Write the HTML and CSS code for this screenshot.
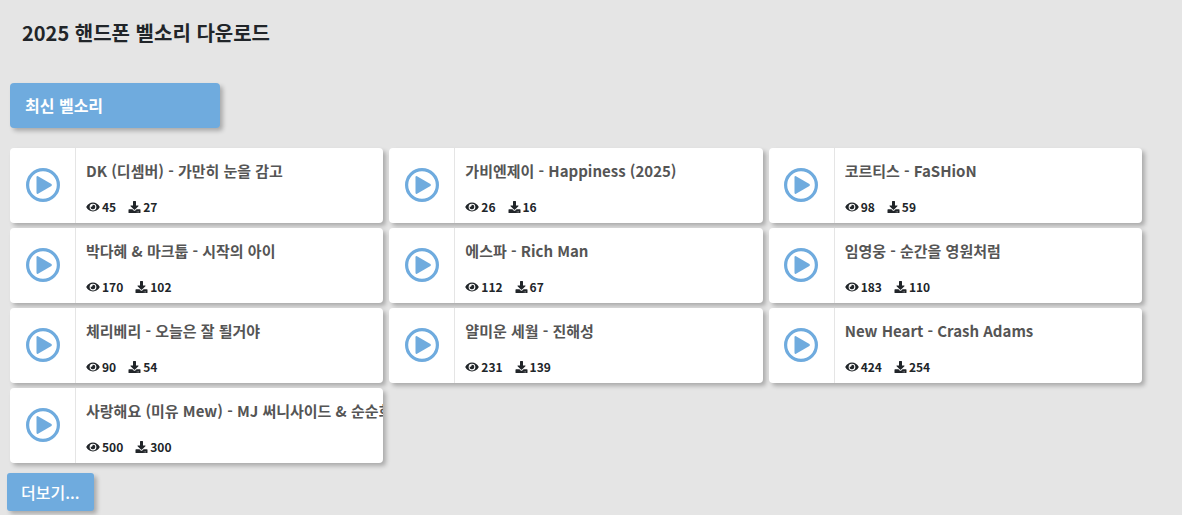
FILE: index.html
```
<!DOCTYPE html>
<html lang="ko">
<head>
<meta charset="utf-8">
<meta name="viewport" content="width=device-width, initial-scale=1">
<title>2025 핸드폰 벨소리 다운로드</title>
<link rel="stylesheet" href="styles.css">
</head>
<body>
<svg class="sprite" aria-hidden="true">
  <symbol id="play" viewBox="0 0 34 34"><circle cx="17" cy="17" r="15.4" fill="none" stroke="currentColor" stroke-width="3.2"/><path d="M10.500 9.200v15.600q0 1.600 1.500.9l13.400-7.600q1.200-1.100 0-2.200L12 8.300q-1.500-.7-1.500.9z" fill="currentColor"/></symbol>
  <symbol id="eye" viewBox="0 0 576 512"><path fill="currentColor" d="M572.520 241.400C518.290 135.590 410.930 64 288 64S57.680 135.640 3.480 241.410a32.350 32.350 0 0 0 0 29.190C57.710 376.410 165.070 448 288 448s230.320-71.640 284.520-177.410a32.350 32.350 0 0 0 0-29.190zM288 400a144 144 0 1 1 144-144 143.930 143.930 0 0 1-144 144zm0-240a95.310 95.310 0 0 0-25.310 3.790 47.850 47.850 0 0 1-66.900 66.900A95.780 95.780 0 1 0 288 160z"/></symbol>
  <symbol id="download" viewBox="0 0 512 512"><path fill="currentColor" d="M216 0h80c13.300 0 24 10.700 24 24v168h87.700c17.800 0 26.700 21.500 14.100 34.100L269.700 378.300c-7.500 7.500-19.800 7.500-27.300 0L90.100 226.100c-12.600-12.600-3.700-34.100 14.100-34.100H192V24c0-13.300 10.700-24 24-24zm296 376v112c0 13.300-10.700 24-24 24H24c-13.300 0-24-10.700-24-24V376c0-13.300 10.700-24 24-24h146.700l49 49c20.100 20.100 52.500 20.100 72.600 0l49-49H488c13.300 0 24 10.700 24 24zm-124 88c0-11-9-20-20-20s-20 9-20 20 9 20 20 20 20-9 20-20zm64 0c0-11-9-20-20-20s-20 9-20 20 9 20 20 20 20-9 20-20z"/></symbol>
</svg>
<main class="page">
  <h1 class="page-title">2025 핸드폰 벨소리 다운로드</h1>
  <h2 class="section-title">최신 벨소리</h2>
  <ul class="tones">
    <li class="tone"><button class="play" type="button" aria-label="재생"><svg class="play-icon"><use href="#play"/></svg></button><div class="info"><a class="name" href="#">DK (디셈버) - 가만히 눈을 감고</a><div class="stats"><span class="stat"><svg class="eye"><use href="#eye"/></svg>45</span><span class="stat"><svg class="download"><use href="#download"/></svg>27</span></div></div></li>
    <li class="tone"><button class="play" type="button" aria-label="재생"><svg class="play-icon"><use href="#play"/></svg></button><div class="info"><a class="name" href="#">가비엔제이 - Happiness (2025)</a><div class="stats"><span class="stat"><svg class="eye"><use href="#eye"/></svg>26</span><span class="stat"><svg class="download"><use href="#download"/></svg>16</span></div></div></li>
    <li class="tone"><button class="play" type="button" aria-label="재생"><svg class="play-icon"><use href="#play"/></svg></button><div class="info"><a class="name" href="#">코르티스 - FaSHioN</a><div class="stats"><span class="stat"><svg class="eye"><use href="#eye"/></svg>98</span><span class="stat"><svg class="download"><use href="#download"/></svg>59</span></div></div></li>
    <li class="tone"><button class="play" type="button" aria-label="재생"><svg class="play-icon"><use href="#play"/></svg></button><div class="info"><a class="name" href="#">박다혜 &amp; 마크툽 - 시작의 아이</a><div class="stats"><span class="stat"><svg class="eye"><use href="#eye"/></svg>170</span><span class="stat"><svg class="download"><use href="#download"/></svg>102</span></div></div></li>
    <li class="tone"><button class="play" type="button" aria-label="재생"><svg class="play-icon"><use href="#play"/></svg></button><div class="info"><a class="name" href="#">에스파 - Rich Man</a><div class="stats"><span class="stat"><svg class="eye"><use href="#eye"/></svg>112</span><span class="stat"><svg class="download"><use href="#download"/></svg>67</span></div></div></li>
    <li class="tone"><button class="play" type="button" aria-label="재생"><svg class="play-icon"><use href="#play"/></svg></button><div class="info"><a class="name" href="#">임영웅 - 순간을 영원처럼</a><div class="stats"><span class="stat"><svg class="eye"><use href="#eye"/></svg>183</span><span class="stat"><svg class="download"><use href="#download"/></svg>110</span></div></div></li>
    <li class="tone"><button class="play" type="button" aria-label="재생"><svg class="play-icon"><use href="#play"/></svg></button><div class="info"><a class="name" href="#">체리베리 - 오늘은 잘 될거야</a><div class="stats"><span class="stat"><svg class="eye"><use href="#eye"/></svg>90</span><span class="stat"><svg class="download"><use href="#download"/></svg>54</span></div></div></li>
    <li class="tone"><button class="play" type="button" aria-label="재생"><svg class="play-icon"><use href="#play"/></svg></button><div class="info"><a class="name" href="#">얄미운 세월 - 진해성</a><div class="stats"><span class="stat"><svg class="eye"><use href="#eye"/></svg>231</span><span class="stat"><svg class="download"><use href="#download"/></svg>139</span></div></div></li>
    <li class="tone"><button class="play" type="button" aria-label="재생"><svg class="play-icon"><use href="#play"/></svg></button><div class="info"><a class="name" href="#">New Heart - Crash Adams</a><div class="stats"><span class="stat"><svg class="eye"><use href="#eye"/></svg>424</span><span class="stat"><svg class="download"><use href="#download"/></svg>254</span></div></div></li>
    <li class="tone"><button class="play" type="button" aria-label="재생"><svg class="play-icon"><use href="#play"/></svg></button><div class="info"><a class="name" href="#">사랑해요 (미유 Mew) - MJ 써니사이드 &amp; 순순희</a><div class="stats"><span class="stat"><svg class="eye"><use href="#eye"/></svg>500</span><span class="stat"><svg class="download"><use href="#download"/></svg>300</span></div></div></li>
  </ul>
  <button class="more" type="button">더보기...</button>
</main>
</body>
</html>
```
FILE: styles.css
```
* { box-sizing: border-box; }
body {
  margin: 0;
  background: #e5e5e5;
  color: #212529;
  font-family: "Noto Sans CJK KR", "Noto Sans", sans-serif;
}
.sprite { display: none; }
.page { padding: 18px 40px 4px 7px; }
.page-title {
  margin: 0;
  padding-left: 15px;
  font-size: 20px;
  line-height: 30px;
  font-weight: 700;
}
.section-title {
  width: 210px;
  max-width: 100%;
  margin: 35px 3px 20px;
  padding: 0 15px;
  border-radius: 4px;
  background: #6fabde;
  box-shadow: 3px 3px 4px rgba(0, 0, 0, .25);
  color: #fff;
  font-size: 16px;
  line-height: 45px;
  font-weight: 700;
}
.tones {
  display: grid;
  grid-template-columns: repeat(3, minmax(0, 1fr));
  gap: 5px 6px;
  margin: 0 0 10px;
  padding: 0 0 0 3px;
  list-style: none;
}
.tone {
  display: flex;
  height: 75px;
  overflow: hidden;
  border-radius: 4px;
  background: #fff;
  box-shadow: 3px 3px 4px rgba(0, 0, 0, .25);
}
.play {
  flex: 0 0 66px;
  display: flex;
  align-items: center;
  justify-content: center;
  padding: 0 0 1px;
  border: 0;
  border-right: 1px solid #e5e5e5;
  background: none;
  color: #6fabde;
  cursor: pointer;
}
.play-icon { width: 34px; height: 34px; }
.info {
  flex: 1;
  min-width: 0;
  display: flex;
  flex-direction: column;
  justify-content: space-between;
  padding: 11px 0 7px 10px;
}
.name {
  overflow: hidden;
  color: #555;
  font-size: 15px;
  line-height: 24px;
  font-weight: 700;
  text-decoration: none;
  white-space: nowrap;
}
.stats {
  display: flex;
  gap: 12px;
  font-size: 12px;
  line-height: 18px;
  font-weight: 700;
}
.stat { display: flex; align-items: center; gap: 2px; }
.eye { width: 14px; height: 12px; }
.download { width: 13px; height: 12px; }
.more {
  display: block;
  padding: 0 14px;
  border: 0;
  border-radius: 3px;
  background: #6fabde;
  box-shadow: 3px 3px 4px rgba(0, 0, 0, .25);
  color: #fff;
  font: 500 16px/38px "Noto Sans CJK KR", "Noto Sans", sans-serif;
  cursor: pointer;
}
```
